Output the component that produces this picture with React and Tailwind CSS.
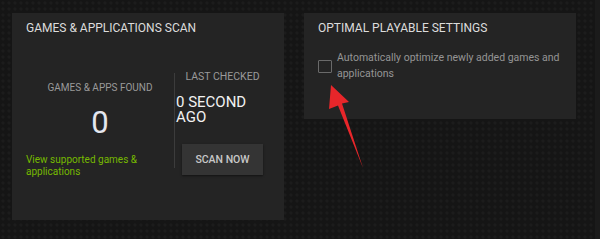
import React from 'react';

const Panel = ({ className = '', children }) => (
  <div className={`bg-[#242424] pl-[14px] pt-[7px] ${className}`}>{children}</div>
);

const PanelTitle = ({ children }) => (
  <h2 className="text-[12px] leading-[16px] text-[#dcdcdc] uppercase">{children}</h2>
);

const RedArrow = () => (
  <svg className="absolute left-0 top-0 pointer-events-none" width="600" height="239" viewBox="0 0 600 239">
    <polygon
      points="331,85 349,102 342,103.5 363,168 338,105.5 329,109"
      fill="#e8262a"
    />
  </svg>
);

export default function App() {
  return (
    <div
      className="relative w-[600px] h-[239px] overflow-hidden bg-[#151515] bg-[radial-gradient(circle,#1c1c1c_1.4px,transparent_1.8px)] bg-[length:6px_6px] border-r-[5px] border-[#1b1b1b] font-['Roboto',sans-serif]"
    >
      <div className="flex items-start gap-5 pl-3 pt-[13px]">
        {/* Games & applications scan */}
        <Panel className="w-[272px] h-[207px]">
          <PanelTitle>Games &amp; Applications Scan</PanelTitle>
          <div className="flex items-start mt-[34px]">
            <div className="w-[148px] pt-[11px]">
              <div className="text-center text-[10px] leading-[14px] text-[#9a9a9a] uppercase">
                Games &amp; Apps Found
              </div>
              <div className="mt-[12px] text-center text-[31px] leading-[32px] text-[#e4e6ee]">0</div>
              <a className="block mt-[15px] text-[10px] leading-[12px] text-[#76b900] cursor-pointer">
                View supported games &amp;<br />applications
              </a>
            </div>
            <div className="mt-[3px] w-px h-[95px] bg-[#3c3c3c]" />
            <div className="w-[95px]">
              <div className="text-center text-[10.5px] leading-[14px] text-[#9a9a9a] uppercase">
                Last Checked
              </div>
              <div className="mt-[11px] pl-px text-[15px] leading-[15px] text-[#f2f2f2] uppercase">
                0 Second
                <br />
                Ago
              </div>
              <div className="mt-[19px] flex justify-center">
                <button className="w-[81px] h-[31px] bg-[#343434] text-[10.5px] font-medium text-[#c8c8c8] uppercase shadow-[0_1px_2px_rgba(0,0,0,0.5)]">
                  Scan Now
                </button>
              </div>
            </div>
          </div>
        </Panel>

        {/* Optimal playable settings */}
        <Panel className="w-[272px] pb-[37px]">
          <PanelTitle>Optimal Playable Settings</PanelTitle>
          <div className="flex items-center gap-[5px] mt-[14px]">
            <span className="w-[14px] h-[13px] shrink-0 border-[1.5px] border-[#6a6a6a] rounded-[1px]" />
            <span className="w-[228px] text-[10.5px] leading-[16px] text-[#959595]">
              Automatically optimize newly added games and applications
            </span>
          </div>
        </Panel>
      </div>
      <RedArrow />
    </div>
  );
}
